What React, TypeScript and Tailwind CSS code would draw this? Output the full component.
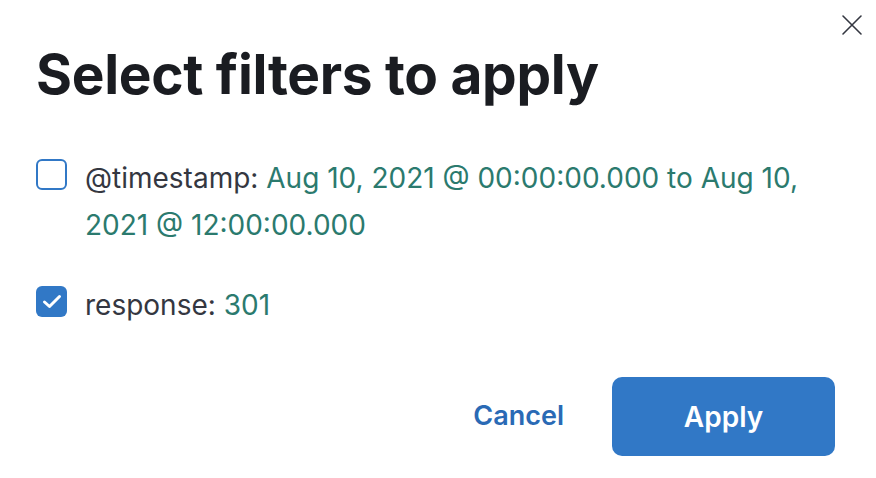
import React from "react";

export default function App() {
  return (
    <div
      className="relative w-[876px] h-[478px] bg-white overflow-hidden"
      style={{ fontFamily: "Inter, 'Noto Sans', sans-serif" }}
    >
      <button className="absolute right-[12px] top-[13px] w-[24px] h-[24px] flex items-center justify-center text-[#343741]">
        <svg width="22" height="22" viewBox="0 0 22 22" fill="none">
          <path d="M2 2 L20 20 M20 2 L2 20" stroke="#343741" strokeWidth="1.6" strokeLinecap="round" />
        </svg>
      </button>
      <div className="pl-[36px] pr-[30px] pt-[40px]">
        <h1 className="text-[55px] leading-[68px] font-bold text-[#1a1c21] tracking-[-0.3px]">
          Select filters to apply
        </h1>
        <div className="mt-[50px] flex flex-col gap-[36px]">
          <div className="flex items-start gap-[18px]">
            <div className="mt-[1px] w-[31px] h-[31px] shrink-0 rounded-[6px] border-2 border-[#3178c6] bg-white" />
            <div className="max-w-[740px] text-[28px] leading-[47px] text-[#343741] -mt-[3px]">
              @timestamp: <span className="text-[#2b7a6e]">Aug 10, 2021 @ 00:00:00.000 to Aug 10, 2021 @ 12:00:00.000</span>
            </div>
          </div>
          <div className="flex items-start gap-[18px]">
            <div className="mt-[1px] w-[31px] h-[31px] shrink-0 rounded-[6px] bg-[#3178c6] flex items-center justify-center">
              <svg width="20" height="15" viewBox="0 0 20 15" fill="none">
                <path d="M2.5 8 L7.5 12.5 L17.5 2.5" stroke="white" strokeWidth="3" strokeLinecap="round" strokeLinejoin="round" />
              </svg>
            </div>
            <div className="text-[28px] leading-[47px] text-[#343741] -mt-[3px]">
              response: <span className="text-[#2b7a6e]">301</span>
            </div>
          </div>
        </div>
      </div>
      <div className="absolute left-0 right-0 bottom-[22px] flex justify-end items-center gap-[48px] pr-[41px]">
        <button className="text-[27px] font-semibold text-[#2a6ab5]">Cancel</button>
        <button className="w-[223px] h-[79px] rounded-[10px] bg-[#3178c6] text-white text-[28px] font-semibold">
          Apply
        </button>
      </div>
    </div>
  );
}
